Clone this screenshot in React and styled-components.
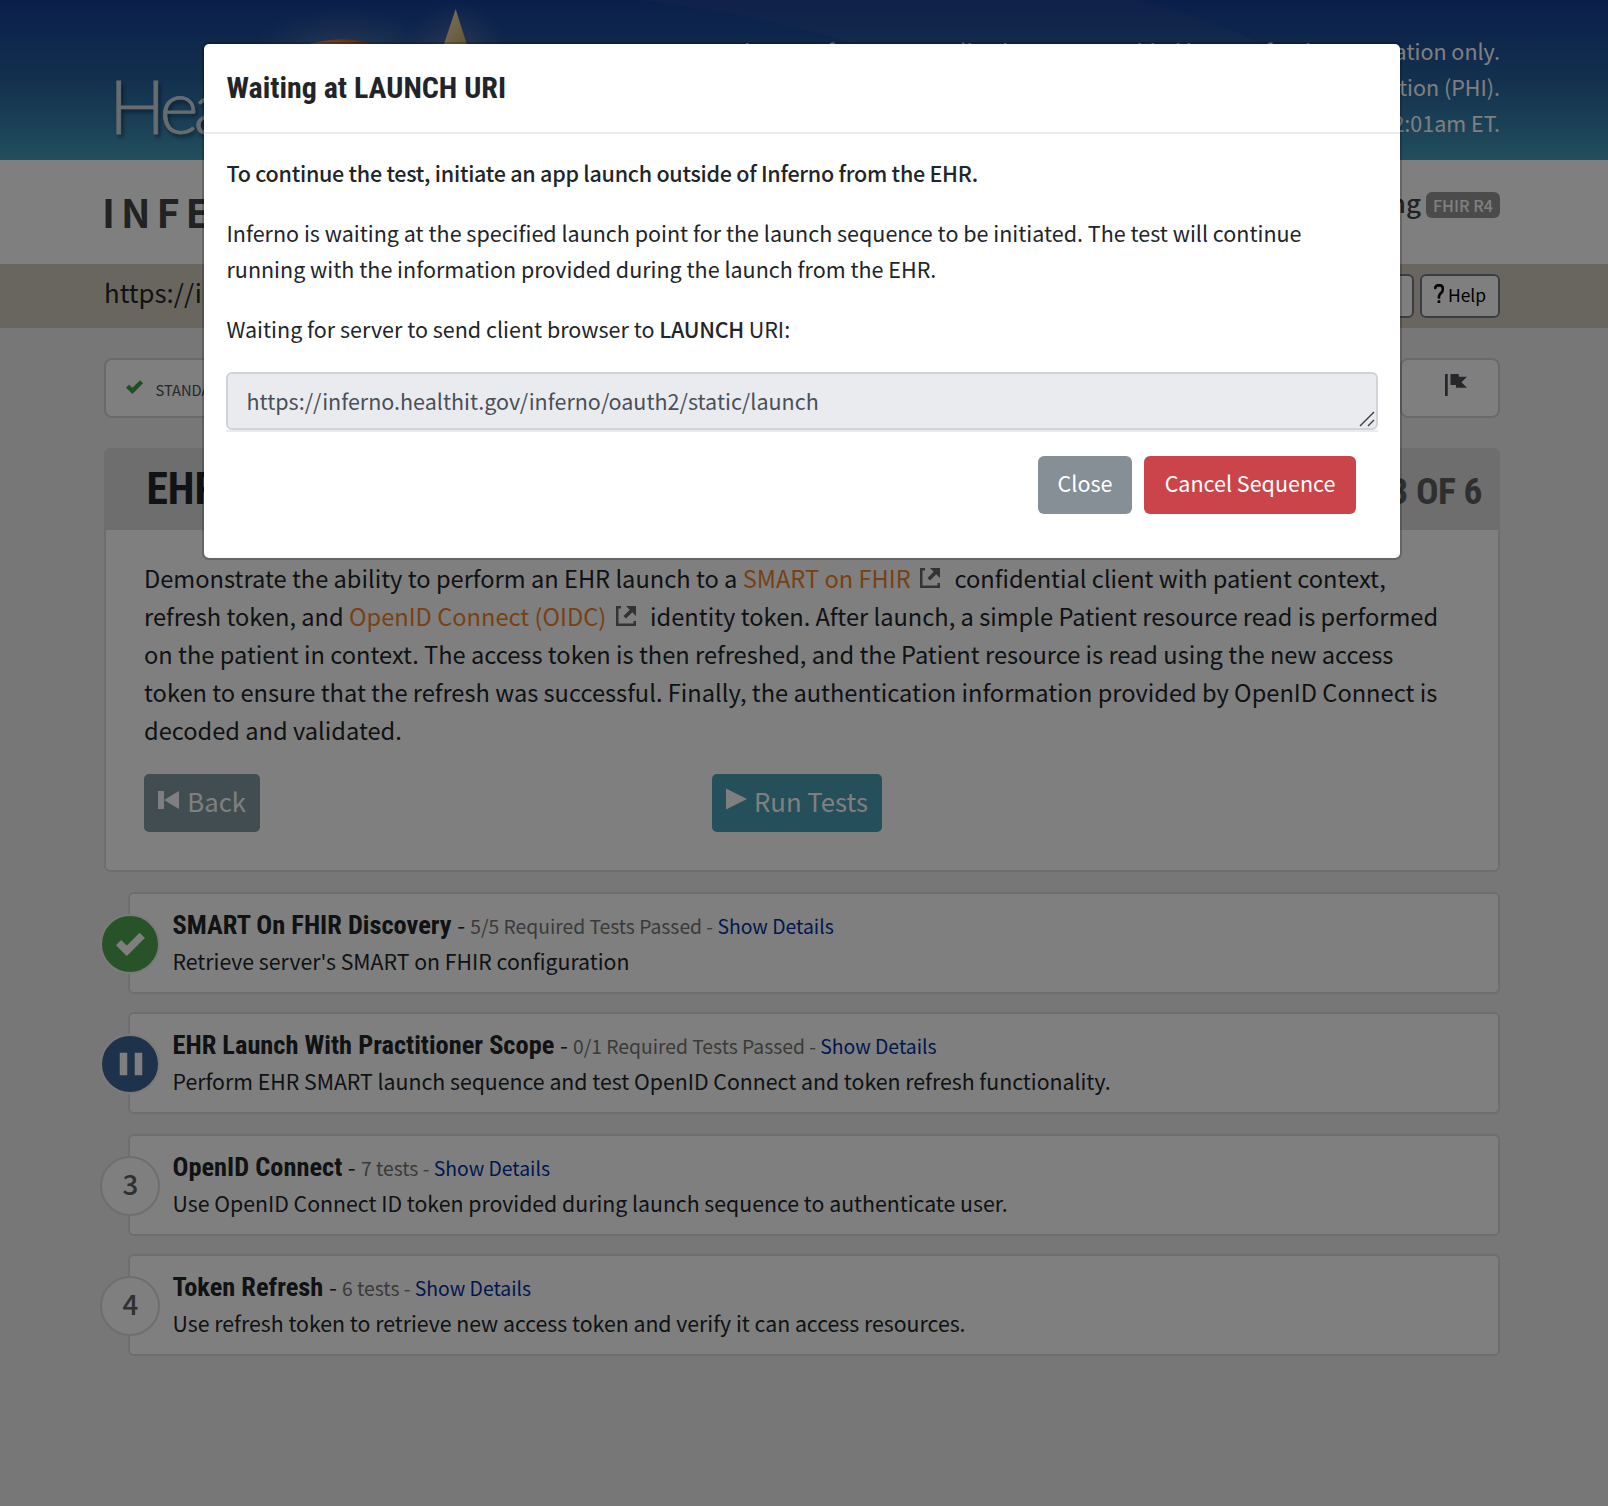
import React from "react";
import styled, { createGlobalStyle } from "styled-components";

const sans = `"Noto Sans CJK JP", "Noto Sans", sans-serif`;
const condensed = `"Roboto Condensed", Roboto, sans-serif`;
const scale = 0.8958;
const fs = (px) => `${(px * scale).toFixed(2)}px`;

const GlobalStyle = createGlobalStyle`
  *, *::before, *::after { box-sizing: border-box; }
  html, body { margin: 0; padding: 0; }
  body { background: #efefef; color: #212529; font: 400 ${fs(24)}/36px ${sans}; overflow: hidden; }
  p, h1, h2, h3 { margin: 0; font-weight: inherit; font-size: inherit; }
  button { font-family: inherit; cursor: pointer; white-space: nowrap; }
`;

const Page = styled.div`
  position: relative;
  height: 1506px;
  overflow: hidden;
  display: flex;
  flex-direction: column;
`;

const Banner = styled.header`
  position: relative;
  height: 160px;
  flex: none;
  padding: 0 108px 0 109px;
  display: flex;
  justify-content: space-between;
  background: linear-gradient(180deg, #144094 0%, #1b4a98 20%, #26629e 50%, #3784ae 80%, #469eba 100%);
`;

const BannerArt = styled.svg`
  position: absolute;
  inset: 0;
`;

const Logo = styled.div`
  position: relative;
  padding-top: 64px;
  font-family: Lato, sans-serif;
  font-size: 75px;
  line-height: 82px;
  font-weight: 300;
  letter-spacing: -5px;
  color: #ccd8e0;
  -webkit-text-stroke: 0.8px #ccd8e0;
  text-shadow: 2px 3px 4px rgba(0, 10, 40, 0.6);
`;

const Notice = styled.div`
  position: relative;
  padding-top: 33px;
  text-align: right;
  color: #fff;
`;

const TitleBar = styled.div`
  height: 104px;
  flex: none;
  background: #fff;
  padding: 0 108px 0 102px;
  display: flex;
  justify-content: space-between;
  align-items: flex-start;
`;

const Brand = styled.h1`
  padding-top: 21px;
  font-size: ${fs(44)};
  line-height: 60px;
  font-weight: 700;
  letter-spacing: 6px;
  color: #444;
`;

const Program = styled.div`
  display: flex;
  align-items: flex-start;
  gap: 5px;
  padding-top: 24px;
  font-size: ${fs(29)};
  line-height: 35px;
  font-weight: 500;
  color: #444;
`;

const VersionBadge = styled.span`
  margin-top: 8px;
  width: 74px;
  height: 26px;
  border-radius: 6px;
  background: #969696;
  color: #fff;
  font-size: ${fs(18)};
  line-height: 27px;
  font-weight: 500;
  text-align: center;
`;

const ServerBar = styled.div`
  height: 64px;
  flex: none;
  background: #d3ccbf;
  padding: 0 108px 0 104px;
  display: flex;
  justify-content: space-between;
`;

const ServerUrl = styled.div`
  font-size: ${fs(28.8)};
  line-height: 55px;
`;

const ToolButtons = styled.div`
  display: flex;
  gap: 6px;
  padding-top: 10px;
`;

const ToolButton = styled.button`
  height: 44px;
  width: ${(p) => p.$width}px;
  padding: 0 0 2px;
  display: flex;
  align-items: center;
  justify-content: center;
  gap: 4px;
  border: 2px solid #747c88;
  border-radius: 6px;
  background: #fff;
  color: #000;
  font-size: ${fs(19.5)};
  line-height: 36px;
`;

const QuestionIcon = styled.svg`
  width: 10px;
  height: 19px;
  margin-bottom: 4px;
`;

const Main = styled.main`
  padding: 30px 108px 0 104px;
`;

const Tabs = styled.nav`
  display: flex;
  height: 60px;
`;

const Tab = styled.div`
  flex: ${(p) => (p.$width ? `0 0 ${p.$width}px` : "1")};
  display: flex;
  align-items: flex-start;
  justify-content: ${(p) => (p.$width ? "center" : "flex-start")};
  gap: 12px;
  padding: ${(p) => (p.$width ? "14px 0 0 11px" : "12px 0 0 20px")};
  border: 2px solid #d4d4d4;
  border-radius: 8px;
  background: #fff;
  color: #495057;
  font-size: ${fs(16.4)};
`;

const TabCheck = styled.svg`
  width: 17.5px;
  height: 17.5px;
  margin-top: 6px;
  fill: #409e46;
`;

const FlagIcon = styled.svg`
  width: 22px;
  height: 22px;
  fill: #4c4f55;
`;

const Card = styled.section`
  margin-top: 30px;
  height: 424px;
  border: 2px solid #dcdcdc;
  border-radius: 6px;
  background: #fff;
`;

const CardHeader = styled.div`
  height: 80px;
  padding: 0 16px 0 40.5px;
  display: flex;
  justify-content: space-between;
  background: #dcdcdc;
  font-family: ${condensed};
  font-weight: 700;
`;

const CardTitle = styled.h2`
  font-weight: 700;
  font-size: 43.5px;
  line-height: 80px;
`;

const CardCount = styled.span`
  font-size: 37.5px;
  line-height: 83px;
  letter-spacing: -0.5px;
  color: #5f5f5f;
`;

const CardBody = styled.div`
  padding: 29px 36px 0 38px;
`;

const Lead = styled.p`
  font-size: ${fs(26.4)};
  line-height: 38px;
  white-space: nowrap;
`;

const ExternalLink = styled.a`
  color: #ee8427;
`;

const ExternalIcon = styled.svg`
  width: 20px;
  height: 20px;
  margin: 0 9px 0 9.5px;
  fill: #666;
  vertical-align: 0;
`;

const CardActions = styled.div`
  display: flex;
  gap: 452px;
  margin-top: 25px;
`;

const ActionButton = styled.button`
  height: 58px;
  width: ${(p) => p.$width}px;
  padding: 0 14px 0 14px;
  display: flex;
  align-items: center;
  justify-content: space-between;
  border: 0;
  border-radius: 5px;
  background: ${(p) => p.$color};
  color: #fff;
  font-size: ${fs(28.7)};
  line-height: 54px;
`;

const ActionIcon = styled.svg`
  width: ${(p) => p.$size}px;
  height: ${(p) => p.$size}px;
  margin-bottom: ${(p) => (p.$size > 24 ? 9 : 6)}px;
  flex: none;
  fill: #fff;
`;

const ActionLabel = styled.span`
  margin-top: -4px;
`;

const Steps = styled.ol`
  list-style: none;
  margin: 20px 0 0;
  padding: 0 0 0 24px;
  display: flex;
  flex-direction: column;
`;

const Step = styled.li`
  position: relative;
  height: 102px;
  margin-bottom: ${(p) => p.$gap}px;
  padding: 13px 0 0 42.5px;
  border: 2px solid #dcdcdc;
  border-radius: 6px;
  background: #fff;
  font-size: ${fs(23.76)};
`;

const StepMark = styled.div`
  position: absolute;
  left: -30px;
  top: 20px;
  width: 60px;
  height: 60px;
  border-radius: 50%;
  border: 2px solid ${(p) => (p.$color === "#fff" ? "#dcdcdc" : "#f4f4f4")};
  background: ${(p) => p.$color};
  color: #606060;
  display: flex;
  align-items: center;
  justify-content: center;
  font-size: ${fs(31)};
  line-height: 48px;
  font-weight: 500;
  padding: 0 0 7px 1px;
`;

const MarkIcon = styled.svg`
  width: ${(p) => p.$size}px;
  height: ${(p) => p.$size}px;
  margin-top: 6px;
  fill: #fff;
`;

const StepHeading = styled.div`
  height: 36px;
  white-space: nowrap;
`;

const StepTitle = styled.h3`
  display: inline;
  font-family: ${condensed};
  font-size: 26.4px;
  line-height: 1;
  font-weight: 700;
`;

const StepDash = styled.span`
  margin: 0 5.2px 0 5.6px;
  font-size: ${fs(25.5)};
  line-height: 1;
`;

const StepStatus = styled.small`
  font-size: ${fs(21.55)};
  line-height: 1;
  color: #747474;
`;

const StepLink = styled.a`
  font-size: ${fs(21.65)};
  line-height: 1;
  color: #00309c;
`;

const StepText = styled.p`
  line-height: 36px;
`;

const Backdrop = styled.div`
  position: absolute;
  inset: 0;
  background: rgba(0, 0, 0, 0.5);
  display: flex;
  justify-content: center;
  align-items: flex-start;
  padding: 42px 4px 0 0;
`;

const Modal = styled.div`
  width: 1200px;
  height: 518px;
  border: 2px solid rgba(0, 0, 0, 0.2);
  border-radius: 7px;
  background: #fff;
  background-clip: padding-box;
`;

const ModalHeader = styled.div`
  height: 90px;
  padding-left: 22.5px;
  border-bottom: 2px solid #e9ebef;
`;

const ModalTitle = styled.h2`
  font: 700 30px/88px ${condensed};
`;

const ModalBody = styled.div`
  padding: 21px 22px 0;
`;

const ModalText = styled.p`
  margin-bottom: 24px;
  padding-left: 0.5px;
  white-space: nowrap;
  font-weight: ${(p) => (p.$strong ? 500 : 400)};
  letter-spacing: ${(p) => (p.$strong ? "-0.255px" : "normal")};
`;

const Strong = styled.strong`
  font-weight: 500;
  letter-spacing: -0.3px;
`;

const UriField = styled.div`
  margin-top: 25px;
  border-bottom: 2px solid #e9ebef;
`;

const UriBox = styled.div`
  height: 58px;
  display: flex;
  justify-content: space-between;
  align-items: flex-end;
  padding: 0 1px 1px 18.5px;
  border: 2px solid #ced4d8;
  border-radius: 6px;
  background: #e9ebef;
  color: #495057;
  line-height: 52px;
`;

const Grip = styled.svg`
  width: 16px;
  height: 16px;
  stroke: #3c3c3c;
  stroke-width: 1.4;
  fill: none;
`;

const ModalActions = styled.div`
  display: flex;
  justify-content: flex-end;
  gap: 12px;
  padding: 24px 22px 0 0;
`;

const ModalButton = styled.button`
  height: 58px;
  width: ${(p) => p.$width}px;
  padding: 0 0 4px;
  border: 0;
  border-radius: 6px;
  background: ${(p) => p.$color};
  color: #fff;
  font-size: ${fs(24)};
  line-height: 54px;
`;

const CHECK =
  "M6.41 0l-.69.72-2.78 2.78-.81-.78-.72-.72-1.41 1.41.72.72 1.5 1.5.69.72.72-.72 3.5-3.5.72-.72-1.44-1.41z";

const steps = [
  {
    mark: "check",
    color: "#50a651",
    title: "SMART On FHIR Discovery",
    status: "5/5 Required Tests Passed",
    text: "Retrieve server's SMART on FHIR configuration",
    gap: 18,
  },
  {
    mark: "pause",
    color: "#3c6496",
    title: "EHR Launch With Practitioner Scope",
    status: "0/1 Required Tests Passed",
    text: "Perform EHR SMART launch sequence and test OpenID Connect and token refresh functionality.",
    gap: 20,
  },
  {
    mark: "3",
    color: "#fff",
    title: "OpenID Connect",
    status: "7 tests",
    text: "Use OpenID Connect ID token provided during launch sequence to authenticate user.",
    gap: 18,
  },
  {
    mark: "4",
    color: "#fff",
    title: "Token Refresh",
    status: "6 tests",
    text: "Use refresh token to retrieve new access token and verify it can access resources.",
    gap: 0,
  },
];

function Mark({ kind }) {
  if (kind === "check") {
    return (
      <MarkIcon viewBox="0 0 8 8" $size={29.5}>
        <path transform="translate(0 1)" d={CHECK} />
      </MarkIcon>
    );
  }
  if (kind === "pause") {
    return (
      <MarkIcon viewBox="0 0 8 8" $size={30}>
        <path transform="translate(1 1)" d="M0 0v6h2v-6h-2zm4 0v6h2v-6h-2z" />
      </MarkIcon>
    );
  }
  return kind;
}

function External() {
  return (
    <ExternalIcon viewBox="0 0 8 8">
      <path d="M0 0v8h8v-2h-1v1h-6v-6h1v-1h-2zm4 0l1.5 1.5-2.5 2.5 1 1 2.5-2.5 1.5 1.5v-4h-4z" />
    </ExternalIcon>
  );
}

export default function App() {
  return (
    <>
      <GlobalStyle />
      <Page>
        <Banner>
          <BannerArt width="1608" height="160" viewBox="0 0 1608 160">
            <defs>
              <radialGradient id="glow">
                <stop offset="0" stopColor="#b0a8b0" stopOpacity="0.4" />
                <stop offset="1" stopColor="#8090c0" stopOpacity="0" />
              </radialGradient>
              <linearGradient id="flame">
                <stop offset="0" stopColor="#c88a60" />
                <stop offset="0.45" stopColor="#d8783c" />
                <stop offset="1" stopColor="#8c2c14" />
              </linearGradient>
              <linearGradient id="star" x1="0" y1="0" x2="1" y2="1">
                <stop offset="0" stopColor="#f4e8c0" />
                <stop offset="1" stopColor="#c8a45c" />
              </linearGradient>
              <linearGradient id="beam" x1="0" y1="0" x2="0" y2="1">
                <stop offset="0" stopColor="#604888" stopOpacity="0.15" />
                <stop offset="0.3" stopColor="#6078a8" stopOpacity="0.12" />
                <stop offset="1" stopColor="#6070b0" stopOpacity="0" />
              </linearGradient>
            </defs>
            <path d="M520 0H1135Q1200 14 1262 44L1400 160H1100L855 44Q760 14 640 0z" fill="url(#beam)" />
            <ellipse cx="345" cy="55" rx="95" ry="48" fill="url(#glow)" />
            <ellipse cx="456" cy="50" rx="50" ry="50" fill="url(#glow)" />
            <path d="M296 48Q342 31 390 48z" fill="url(#flame)" />
            <path d="M455.7 9L468.5 50H442z" fill="url(#star)" />
          </BannerArt>
          <Logo>HealthIT</Logo>
          <Notice>
            <p>The use of our open online instance provided by ONC for demonstration only.</p>
            <p>Please do not submit protected health information (PHI).</p>
            <p>The database is reset daily at 12:01am ET.</p>
          </Notice>
        </Banner>
        <TitleBar>
          <Brand>INFERNO</Brand>
          <Program>
            Program Edition Testing <VersionBadge>FHIR R4</VersionBadge>
          </Program>
        </TitleBar>
        <ServerBar>
          <ServerUrl>https://inferno.healthit.gov/</ServerUrl>
          <ToolButtons>
            <ToolButton $width={110}>Report</ToolButton>
            <ToolButton $width={80}>
              <QuestionIcon viewBox="0 0 5 8" preserveAspectRatio="none">
                <path
                  stroke="#000"
                  strokeWidth="0.3"
                  d="M2.47 0c-.85 0-1.48.26-1.88.66-.4.4-.54.9-.59 1.28l1 .13c.04-.25.12-.5.31-.69.19-.19.49-.38 1.16-.38.66 0 1.02.16 1.22.34.2.18.28.4.28.66 0 .83-.34 1.06-.84 1.5-.5.44-1.16 1.08-1.16 2.25v.25h1v-.25c0-.83.31-1.06.81-1.5.5-.44 1.19-1.08 1.19-2.25 0-.48-.17-1.02-.59-1.41-.43-.39-1.07-.59-1.91-.59zm-.5 7v1h1v-1h-1z"
                />
              </QuestionIcon>
              Help
            </ToolButton>
          </ToolButtons>
        </ServerBar>
        <Main>
          <Tabs>
            <Tab>
              <TabCheck viewBox="0 0 8 8">
                <path transform="translate(0 1)" d={CHECK} />
              </TabCheck>
              STANDALONE
            </Tab>
            <Tab $width={100}>
              <FlagIcon viewBox="0 0 8 8">
                <path d="M0 0v8h1v-8h-1zm2 0v4h2v1h4l-2-1.97 2-2.03h-3v-1h-3z" />
              </FlagIcon>
            </Tab>
          </Tabs>
          <Card>
            <CardHeader>
              <CardTitle>EHR Practitioner App</CardTitle>
              <CardCount>3 OF 6</CardCount>
            </CardHeader>
            <CardBody>
              <Lead>
                Demonstrate the ability to perform an EHR launch to a <ExternalLink>SMART on FHIR</ExternalLink>
                <External /> confidential client with patient context,
                <br />
                refresh token, and <ExternalLink>OpenID Connect (OIDC)</ExternalLink>
                <External /> identity token. After launch, a simple Patient resource read is performed
                <br />
                on the patient in context. The access token is then refreshed, and the Patient resource is read using the new access
                <br />
                token to ensure that the refresh was successful. Finally, the authentication information provided by OpenID Connect is
                <br />
                decoded and validated.
              </Lead>
              <CardActions>
                <ActionButton $width={116} $color="#849ba3">
                  <ActionIcon viewBox="0 0 8 8" $size={24}>
                    <path transform="translate(0 1)" d="M0 0v6h2v-6h-2zm2 3l5 3v-6l-5 3z" />
                  </ActionIcon>
                  <ActionLabel>Back</ActionLabel>
                </ActionButton>
                <ActionButton $width={170} $color="#4a9eb6">
                  <ActionIcon viewBox="1 0 7 8" $size={28}>
                    <path transform="translate(.5 1)" d="M0 0v6l6-3-6-3z" />
                  </ActionIcon>
                  <ActionLabel>Run Tests</ActionLabel>
                </ActionButton>
              </CardActions>
            </CardBody>
          </Card>
          <Steps>
            {steps.map((s) => (
              <Step key={s.title} $gap={s.gap}>
                <StepMark $color={s.color}>
                  <Mark kind={s.mark} />
                </StepMark>
                <StepHeading>
                  <StepTitle>{s.title}</StepTitle>
                  <StepDash>-</StepDash>
                  <StepStatus>{s.status} - </StepStatus>
                  <StepLink>Show Details</StepLink>
                </StepHeading>
                <StepText>{s.text}</StepText>
              </Step>
            ))}
          </Steps>
        </Main>
        <Backdrop>
          <Modal role="dialog">
            <ModalHeader>
              <ModalTitle>Waiting at LAUNCH URI</ModalTitle>
            </ModalHeader>
            <ModalBody>
              <ModalText $strong>
                To continue the test, initiate an app launch outside of Inferno from the EHR.
              </ModalText>
              <ModalText>
                Inferno is waiting at the specified launch point for the launch sequence to be initiated. The test will continue
                <br />
                running with the information provided during the launch from the EHR.
              </ModalText>
              <ModalText>
                Waiting for server to send client browser to <Strong>LAUNCH</Strong> URI:
              </ModalText>
              <UriField>
                <UriBox>
                  https://inferno.healthit.gov/inferno/oauth2/static/launch
                  <Grip viewBox="0 0 16 16">
                    <path d="M1 15L15 1M9 15L15 9" />
                  </Grip>
                </UriBox>
              </UriField>
              <ModalActions>
                <ModalButton $width={94} $color="#868e96">Close</ModalButton>
                <ModalButton $width={212} $color="#cb444a">Cancel Sequence</ModalButton>
              </ModalActions>
            </ModalBody>
          </Modal>
        </Backdrop>
      </Page>
    </>
  );
}
